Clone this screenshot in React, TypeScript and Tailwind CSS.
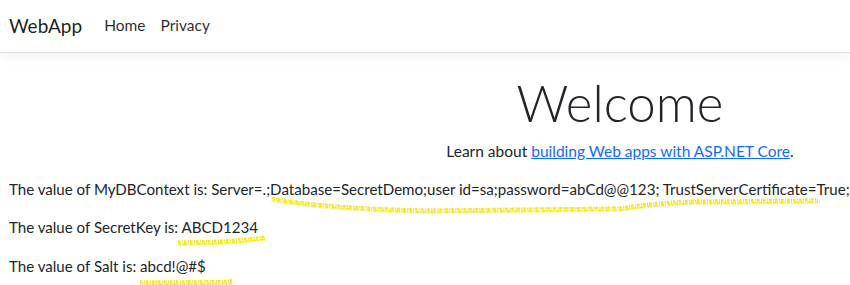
const font = { fontFamily: 'Lato, "Open Sans", sans-serif' };

// spray-paint style highlighter strokes
const Squiggle = ({ d }: { d: string }) => (
  <svg className="absolute top-0 left-0 pointer-events-none" width="850" height="285" viewBox="0 0 850 285">
    <path d={d} fill="none" stroke="#f6ee50" strokeWidth="5" strokeDasharray="3 1 1 1" opacity="0.75" />
    <path d={d} fill="none" stroke="#efe200" strokeWidth="2" strokeDasharray="2 2 1 1" opacity="0.9" transform="translate(0 -1.5)" />
    <path d={d} fill="none" stroke="#f1e400" strokeWidth="1.5" strokeDasharray="1 2 3 1" opacity="0.9" transform="translate(2 1)" />
    <path d={d} fill="none" stroke="#f7ef55" strokeWidth="1" strokeDasharray="1 2" opacity="0.9" transform="translate(-1 2.5)" />
  </svg>
);

export default function App() {
  return (
    <div className="relative w-[850px] h-[285px] overflow-hidden bg-white text-[#212529]" style={font}>
      {/* Navbar */}
      <nav className="h-[53px] flex items-center border-b border-[#dee2e6] shadow-[0_4px_12px_rgba(0,0,0,0.05)] px-[9px]">
        <span className="text-[19px] text-[rgba(0,0,0,0.9)] mr-[22px]">WebApp</span>
        <a className="text-[15.5px] text-[rgba(0,0,0,0.85)] mr-[15px]">Home</a>
        <a className="text-[15.5px] text-[rgba(0,0,0,0.85)]">Privacy</a>
      </nav>

      {/* Main */}
      <main className="px-[9px]">
        <div className="w-[1222px] text-center pt-[24px]">
          <h1 className="text-[51px] font-light leading-[51px] text-[#212529] mb-[11px]">Welcome</h1>
          <p className="text-[15.5px] leading-[24px]">
            Learn about{" "}
            <a className="text-[#0d6efd] underline">building Web apps with ASP.NET Core</a>.
          </p>
        </div>
        <div className="text-[15.1px] leading-[24px] whitespace-nowrap mt-[14px]">
          <p className="mb-[14px]">The value of MyDBContext is: Server=.;Database=SecretDemo;user id=sa;password=abCd@@123; TrustServerCertificate=True;</p>
          <p className="mb-[15px]">The value of SecretKey is: ABCD1234</p>
          <p>The value of Salt is: abcd!@#$</p>
        </div>
      </main>

      <Squiggle d="M272 199 C 300 205, 360 210, 430 211 L 620 209 C 640 206, 660 203, 700 202 L 818 201" />
      <Squiggle d="M178 243 C 205 243, 235 242, 265 238" />
      <Squiggle d="M140 283 C 170 283, 200 283, 232 282" />
    </div>
  );
}
